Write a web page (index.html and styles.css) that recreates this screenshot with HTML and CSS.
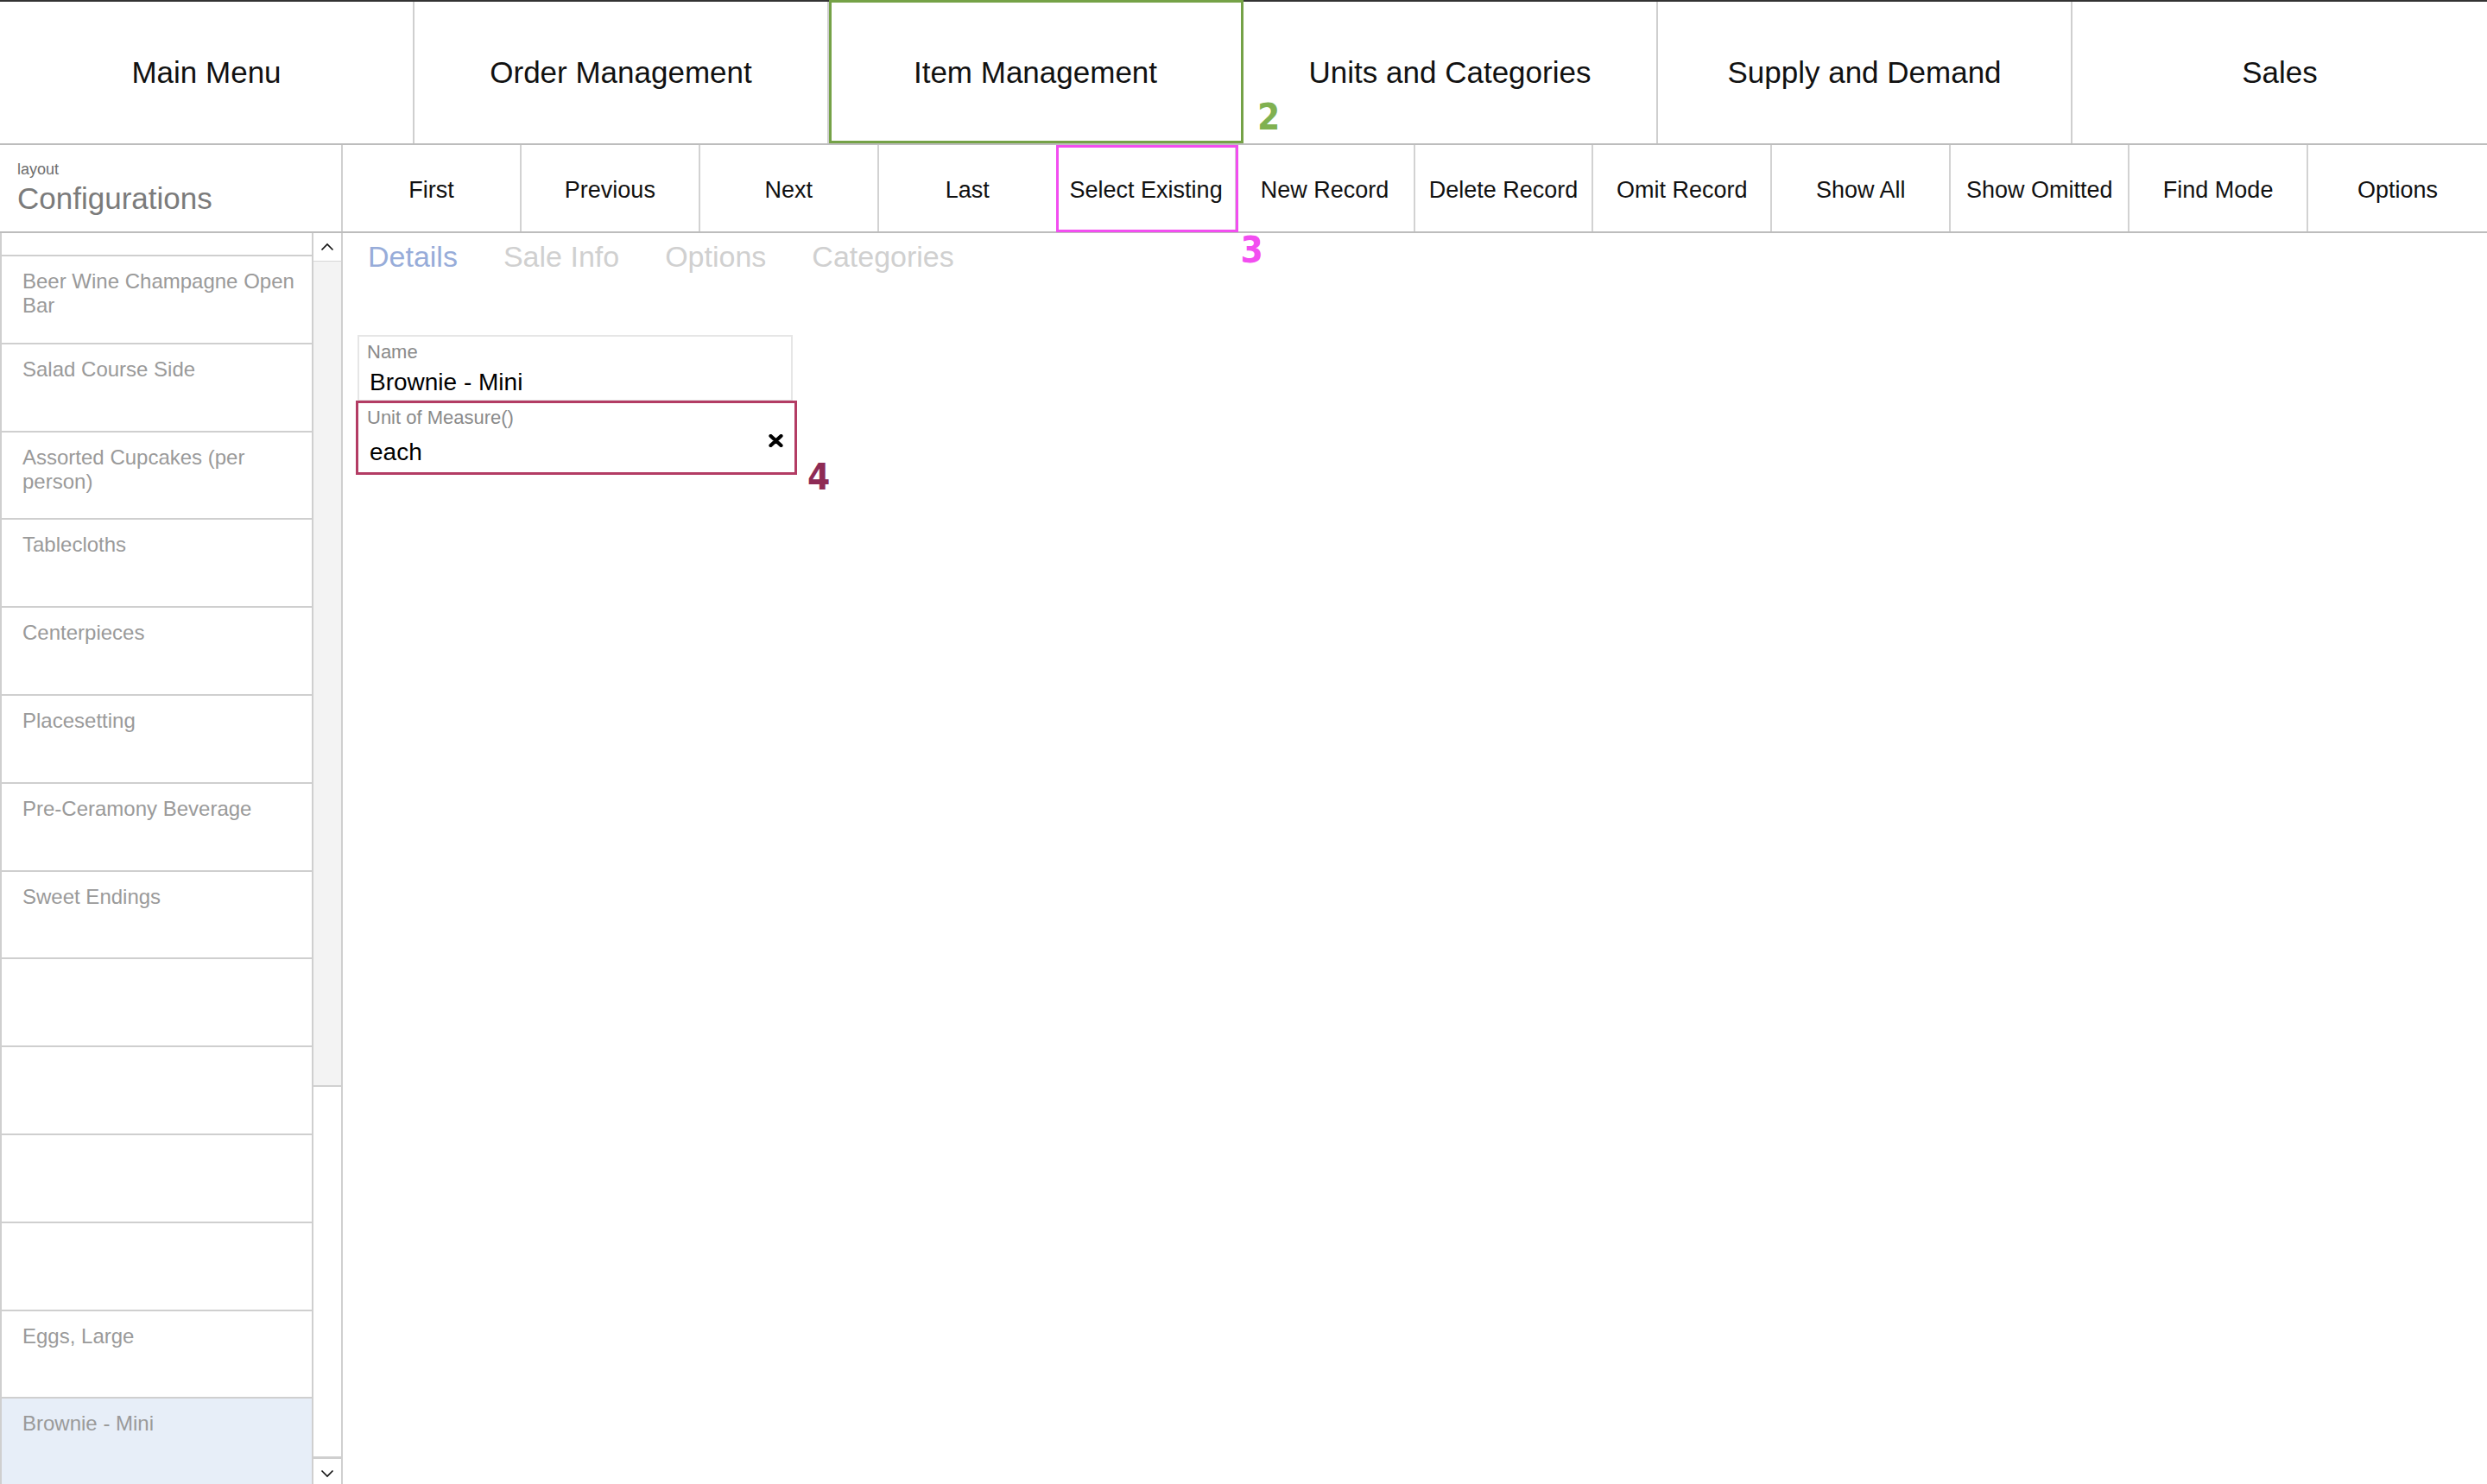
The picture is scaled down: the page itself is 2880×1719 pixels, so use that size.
FILE: index.html
```html
<!DOCTYPE html>
<html lang="en">
<head>
<meta charset="utf-8">
<title>Item Management</title>
<link rel="stylesheet" href="styles.css">
</head>
<body>
<div class="app">
  <nav class="topnav">
    <div class="navcell">Main Menu</div>
    <div class="navcell">Order Management</div>
    <div class="navcell active">Item Management<span class="mark mark-green">2</span></div>
    <div class="navcell">Units and Categories</div>
    <div class="navcell">Supply and Demand</div>
    <div class="navcell">Sales</div>
  </nav>

  <div class="toolrow">
    <div class="layoutname">
      <div class="layout-label">layout</div>
      <div class="layout-title">Configurations</div>
    </div>
    <div class="tool">First</div>
    <div class="tool">Previous</div>
    <div class="tool">Next</div>
    <div class="tool">Last</div>
    <div class="tool selected">Select Existing<span class="mark mark-pink">3</span></div>
    <div class="tool">New Record</div>
    <div class="tool">Delete Record</div>
    <div class="tool">Omit Record</div>
    <div class="tool">Show All</div>
    <div class="tool">Show Omitted</div>
    <div class="tool">Find Mode</div>
    <div class="tool">Options</div>
  </div>

  <div class="main">
    <aside class="sidebar">
      <div class="list">
        <div class="row partial"></div>
        <div class="row">Beer Wine Champagne Open Bar</div>
        <div class="row">Salad Course Side</div>
        <div class="row">Assorted Cupcakes (per person)</div>
        <div class="row">Tablecloths</div>
        <div class="row">Centerpieces</div>
        <div class="row">Placesetting</div>
        <div class="row">Pre-Ceramony Beverage</div>
        <div class="row">Sweet Endings</div>
        <div class="row"></div>
        <div class="row"></div>
        <div class="row"></div>
        <div class="row"></div>
        <div class="row">Eggs, Large</div>
        <div class="row current">Brownie - Mini</div>
      </div>
      <div class="scrollbar">
        <div class="sb-btn sb-up">
          <svg width="16" height="10" viewBox="0 0 16 10"><path d="M1.5 8.5 L8 2 L14.5 8.5" fill="none" stroke="#111" stroke-width="1.6"/></svg>
        </div>
        <div class="sb-thumb"></div>
        <div class="sb-track"></div>
        <div class="sb-btn sb-down">
          <svg width="16" height="10" viewBox="0 0 16 10"><path d="M1.5 1.5 L8 8 L14.5 1.5" fill="none" stroke="#111" stroke-width="1.6"/></svg>
        </div>
      </div>
    </aside>

    <section class="content">
      <div class="tabs">
        <span class="tab active">Details</span>
        <span class="tab">Sale Info</span>
        <span class="tab">Options</span>
        <span class="tab">Categories</span>
      </div>
      <div class="form">
        <div class="field field-name">
          <div class="field-label">Name</div>
          <div class="field-value">Brownie - Mini</div>
        </div>
        <div class="field field-uom">
          <div class="field-label">Unit of Measure()</div>
          <div class="field-value">each</div>
          <span class="clear">
            <svg width="17" height="15" viewBox="0 0 17 15"><path d="M2.5 2 L14.5 13 M14.5 2 L2.5 13" stroke="#000" stroke-width="4.2" stroke-linecap="round"/></svg>
          </span>
          <span class="mark mark-red">4</span>
        </div>
      </div>
    </section>
  </div>
</div>
</body>
</html>
```

FILE: styles.css
```css
* { box-sizing: border-box; }

html, body {
  margin: 0;
  padding: 0;
  background: #fff;
}

body {
  font-family: "Liberation Sans", Arial, "Helvetica Neue", sans-serif;
  color: #000;
  width: 2880px;
  height: 1719px;
  overflow: hidden;
}

.app {
  width: 2880px;
  height: 1719px;
  display: flex;
  flex-direction: column;
}

/* ---------- top navigation ---------- */
.topnav {
  display: grid;
  grid-template-columns: repeat(6, 1fr);
  height: 168px;
  border-top: 2px solid #333;
  border-bottom: 2px solid #bdbdbd;
  flex: none;
}

.navcell {
  position: relative;
  display: flex;
  align-items: center;
  justify-content: center;
  font-size: 35px;
  color: #111;
  border-right: 2px solid #cfcfcf;
}

.navcell:last-child { border-right: none; }

.navcell.active::after {
  content: "";
  position: absolute;
  top: -2px;
  left: 0;
  right: -2px;
  bottom: 0;
  border: 3px solid #75a247;
}

/* annotation marks */
.mark {
  position: absolute;
  font-family: "Liberation Sans Narrow", "DejaVu Sans Condensed", "Liberation Sans", sans-serif;
  font-weight: bold;
  font-size: 42px;
  line-height: 42px;
  z-index: 2;
}

.mark-green {
  color: #80b151;
  left: 496px;
  top: 113px;
}

.mark-pink {
  color: #f24ef0;
  left: calc(100% + 7px);
  top: 101px;
}

.mark-red {
  color: #8e2b55;
  left: calc(100% + 15px);
  top: 65px;
}

/* ---------- toolbar row ---------- */
.toolrow {
  display: grid;
  grid-template-columns: 397px repeat(12, 1fr);
  height: 102px;
  border-bottom: 2px solid #bdbdbd;
  flex: none;
}

.layoutname {
  border-right: 2px solid #cfcfcf;
  padding: 18px 0 0 20px;
}

.layout-label {
  font-size: 18px;
  line-height: 20px;
  color: #6e6e6e;
}

.layout-title {
  margin-top: 5px;
  font-size: 35px;
  line-height: 38px;
  color: #7b7b7b;
}

.tool {
  position: relative;
  display: flex;
  align-items: center;
  justify-content: center;
  padding-top: 4px;
  font-size: 27px;
  color: #111;
  white-space: nowrap;
  border-right: 2px solid #d2d2d2;
}

.tool:last-child { border-right: none; }

.tool.selected::after {
  content: "";
  position: absolute;
  top: 0;
  left: -2px;
  right: -4px;
  bottom: -1px;
  border: 3px solid #f24ef0;
}

/* ---------- main area ---------- */
.main {
  flex: 1;
  display: flex;
  min-height: 0;
  overflow: hidden;
}

.sidebar {
  width: 397px;
  flex: none;
  display: flex;
  border-right: 2px solid #cfcfcf;
  overflow: hidden;
}

.list {
  width: 363px;
  flex: none;
  border-left: 2px solid #cfcfcf;
  border-right: 2px solid #cfcfcf;
}

.row {
  height: 101.8px;
  border-bottom: 2px solid #cfcfcf;
  padding: 15px 6px 0 24px;
  font-size: 24px;
  line-height: 28px;
  color: #9a9a9a;
}

.row.partial { height: 27px; }

.row.current { background: #e7eef8; }

.scrollbar {
  flex: 1;
  display: flex;
  flex-direction: column;
}

.sb-btn {
  display: flex;
  align-items: center;
  justify-content: center;
  background: #fff;
}

.sb-up {
  height: 33px;
  border-bottom: 1px solid #d6d6d6;
}

.sb-thumb {
  height: 956px;
  background: #f3f3f3;
  border-bottom: 2px solid #d0d0d0;
}

.sb-track {
  flex: 1;
  background: #fff;
}

.sb-down {
  height: 32px;
  border-top: 3px solid #cfcfcf;
  padding-top: 4px;
}

/* ---------- content ---------- */
.content {
  flex: 1;
  padding: 7px 0 0 29px;
}

.tabs {
  display: flex;
  gap: 53px;
  height: 40px;
}

.tab {
  font-size: 34px;
  line-height: 40px;
  color: #d0d0d0;
}

.tab.active { color: #97acd9; }

.form {
  margin-top: 71px;
  margin-left: -12px;
  width: 505px;
}

.field {
  position: relative;
}

.field-name {
  width: 504px;
  border: 2px solid #e6e6e6;
  padding: 6px 10px 4px 9px;
}

.field-uom {
  width: 511px;
  margin-left: -2px;
  margin-top: -1px;
  border: 3px solid #b33c64;
  padding: 5px 10px 7px 10px;
}

.field-label {
  font-size: 22px;
  line-height: 24px;
  color: #8a8a8a;
}

.field-value {
  font-size: 28px;
  line-height: 32px;
  color: #000;
  padding-left: 3px;
  margin-top: 7px;
}

.field-uom .field-value { margin-top: 12px; }

.clear {
  position: absolute;
  right: 13px;
  top: 36px;
  width: 17px;
  height: 15px;
  display: block;
}

.clear svg { display: block; }
```
